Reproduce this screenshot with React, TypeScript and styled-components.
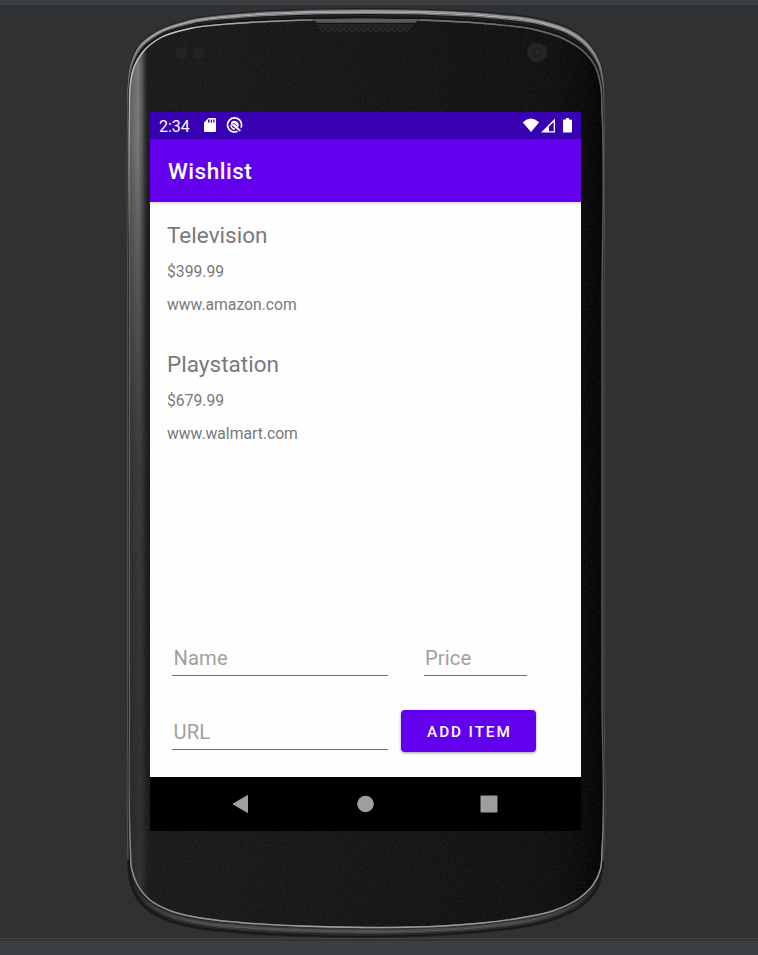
import React from "react";
import styled, { createGlobalStyle } from "styled-components";

const GlobalStyle = createGlobalStyle`
  * { box-sizing: border-box; }
  body { margin: 0; background: #2f3133; font-family: Roboto, "Noto Sans", sans-serif; }
`;

const Workspace = styled.main`
  position: relative;
  width: 758px;
  height: 955px;
  overflow: hidden;
  display: flex;
  flex-direction: column;
  background: #2f3133;
`;

const TopEdge = styled.div`
  height: 5px;
  flex: none;
  background: #3c3f41;
`;

const Stage = styled.div`
  flex: 1;
  padding: 107px 177px 0 150px;
`;

const BottomEdge = styled.div`
  height: 17px;
  flex: none;
  border-top: 1px solid #424446;
  background: linear-gradient(#303234 2px, #3c3f41 2px);
`;

const Shell = styled.svg`
  position: absolute;
  inset: 0;
  pointer-events: none;
`;

const Screen = styled.section`
  position: relative;
  width: 431px;
  height: 719px;
  display: flex;
  flex-direction: column;
  background: #fefefe;
`;

const StatusBar = styled.header`
  height: 27px;
  flex: none;
  display: flex;
  align-items: center;
  padding: 0 8px 0 9px;
  background: #3700b3;
  color: #fff;
`;

const Clock = styled.span`
  width: 44px;
  padding-top: 2px;
  font-size: 16px;
  line-height: 26px;
`;

const StatusGroup = styled.div<{ $end?: boolean }>`
  display: flex;
  align-items: center;
  margin-left: ${({ $end }) => ($end ? "auto" : "0")};
  margin-top: -1px;
  svg { display: block; }
`;

const AppBar = styled.div`
  height: 63px;
  flex: none;
  padding: 1px 18px 0;
  background: #6200ee;
  box-shadow: 0 1px 3px rgba(0, 0, 0, 0.2);
`;

const Title = styled.h1`
  margin: 0;
  color: #fff;
  font-size: 22.5px;
  font-weight: 500;
  line-height: 63px;
  letter-spacing: 0.52px;
`;

const Wishes = styled.ul`
  list-style: none;
  margin: 0;
  padding: 17px 17px 0;
  flex: 1;
`;

const Wish = styled.li`
  height: 129px;
  color: #797979;
`;

const WishName = styled.h2`
  margin: 0 0 4px;
  font-size: 22.5px;
  font-weight: 400;
  line-height: 32px;
  letter-spacing: 0.03px;
`;

const WishDetail = styled.p`
  margin: 0;
  font-size: 15.7px;
  line-height: 33px;
  letter-spacing: 0;
`;

const Form = styled.form`
  height: 149px;
  flex: none;
  display: grid;
  grid-template-columns: 216px 135px;
  grid-template-rows: 48px 48px;
  row-gap: 26px;
  column-gap: 13.4px;
  padding: 0 0 0 22px;
`;

const Field = styled.input<{ $narrow?: boolean }>`
  width: ${({ $narrow }) => ($narrow ? "103px" : "216px")};
  height: 48px;
  margin: 0 0 0 ${({ $narrow }) => ($narrow ? "22.6px" : "0")};
  padding: ${({ $narrow }) => ($narrow ? "12px 2px 0 1px" : "12px 2px 0 1.5px")};
  border: 0;
  border-bottom: 1px solid #707070;
  border-radius: 0;
  outline: 0;
  background: transparent;
  font: 400 20.2px Roboto, sans-serif;
  letter-spacing: 0.1px;
  color: #333;
  &::placeholder { color: #a0a0a0; opacity: 1; }
`;

const AddButton = styled.button`
  width: 135px;
  height: 42px;
  margin-top: 8px;
  padding: 2px 0 0 1px;
  border: 0;
  border-radius: 4px;
  background: #6200ee;
  color: #fff;
  font: 500 15.3px Roboto, sans-serif;
  letter-spacing: 1.9px;
  white-space: nowrap;
  box-shadow: 0 1px 3px rgba(0, 0, 0, 0.38);
`;

const NavBar = styled.nav`
  height: 54px;
  flex: none;
  display: grid;
  grid-template-columns: 18px 18px 18px;
  column-gap: 105.5px;
  align-items: center;
  padding-left: 82px;
  background: #000;
  svg { display: block; }
`;

const items = [
  { name: "Television", price: "$399.99", url: "www.amazon.com" },
  { name: "Playstation", price: "$679.99", url: "www.walmart.com" },
];

type Point = [number, number];

/* The casing's outer rim and the glass edge, paired point for point, clockwise. */
const outerPoints: Point[] = [
  [127.5, 300], [127.5, 110], [128, 86], [131, 63], [139, 45], [157, 31], [189, 19.5], [237, 13], [300, 9.6], [366, 8.5],
  [432, 9.5], [495, 13], [543, 19.5], [571, 29], [589, 43], [600, 62], [603.5, 83], [604, 110], [604, 300],
  [604, 700], [604, 850], [602.8, 871], [597, 890], [584, 905], [562, 917], [534, 925.5], [490, 931.5], [432, 935.8], [366, 937.5],
  [300, 936.3], [237, 933], [194, 928], [164, 919.5], [144, 907.5], [132, 890], [128, 870], [127.5, 850], [127.5, 700],
];
const innerPoints: Point[] = [
  [129.5, 300], [129.5, 110], [130, 88], [134, 67], [142, 53], [160, 38], [190, 28.5], [237, 23.3], [300, 20.2], [366, 19.5],
  [432, 20.5], [490, 24], [534, 29.5], [563, 38.5], [583, 51], [595, 66], [600.6, 85], [602, 110], [602, 300],
  [602, 700], [602, 850], [600.5, 869], [593, 885], [578, 899], [554, 910.5], [523, 917.5], [482, 923], [428, 926.7], [366, 927.5],
  [300, 926], [240, 922.5], [199, 917.7], [171, 911], [150, 900], [137, 884], [131.5, 868], [130.5, 850], [129.5, 700],
];

function smoothPath(points: Point[]) {
  const count = points.length;
  const at = (index: number) => points[(index + count) % count];
  const length = (a: Point, b: Point) => Math.hypot(b[0] - a[0], b[1] - a[1]);
  const tangent = (i: number): Point => {
    const a = at(i - 1);
    const b = at(i);
    const c = at(i + 1);
    const before = length(a, b);
    const after = length(b, c);
    return [0, 1].map(
      (k) => (((b[k] - a[k]) / before) * after + ((c[k] - b[k]) / after) * before) / (before + after)
    ) as Point;
  };
  let path = `M${at(0).join(" ")}`;
  for (let i = 0; i < count; i++) {
    const from = at(i);
    const to = at(i + 1);
    const reach = length(from, to) / 3;
    const start = tangent(i);
    const end = tangent(i + 1);
    path += `C${from[0] + start[0] * reach} ${from[1] + start[1] * reach} ${to[0] - end[0] * reach} ${to[1] - end[1] * reach} ${to[0]} ${to[1]}`;
  }
  return path + "Z";
}

const between = (t: number) =>
  smoothPath(outerPoints.map(([x, y], i) => [x + (innerPoints[i][0] - x) * t, y + (innerPoints[i][1] - y) * t]));

const outer = between(0);
const inner = between(1);
const topBands = [
  { t: 0.1, color: "#4b4b4c", width: 1.2 },
  { t: 0.21, color: "#98989a", width: 1.6 },
  { t: 0.33, color: "#b0b0b2", width: 1.6 },
  { t: 0.44, color: "#77777a", width: 1.4 },
  { t: 0.65, color: "#242424", width: 1.2 },
];
const bottomBands = [
  { t: 0.85, color: "#333", width: 1.6 },
  { t: 0.7, color: "#4b4b4b", width: 1.8 },
  { t: 0.55, color: "#585858", width: 1.8 },
  { t: 0.4, color: "#3e3e3e", width: 1.8 },
  { t: 0.24, color: "#262626", width: 1.6 },
];

function PhoneShell() {
  return (
    <Shell width="758" height="955" viewBox="0 0 758 955" aria-hidden="true">
      <defs>
        <linearGradient id="face" gradientUnits="userSpaceOnUse" x1="129" y1="0" x2="602" y2="0">
          <stop offset="0" stopColor="#262728" />
          <stop offset=".025" stopColor="#303031" />
          <stop offset=".04" stopColor="#1b1b1b" />
          <stop offset=".5" stopColor="#161616" />
          <stop offset=".9" stopColor="#111" />
          <stop offset=".96" stopColor="#0a0a0a" />
          <stop offset="1" stopColor="#040404" />
        </linearGradient>
        <linearGradient id="sideShine" x1="0" y1="0" x2="1" y2="0">
          <stop offset="0" stopColor="#555658" />
          <stop offset=".5" stopColor="#78787b" />
          <stop offset=".7" stopColor="#58585b" />
          <stop offset="1" stopColor="#242425" stopOpacity="0" />
        </linearGradient>
        <linearGradient id="shineFade" x1="0" y1="0" x2="0" y2="1">
          <stop offset="0" stopColor="#fff" />
          <stop offset=".12" stopColor="#fff" />
          <stop offset=".5" stopColor="#555" stopOpacity=".5" />
          <stop offset="1" stopColor="#000" stopOpacity="0" />
        </linearGradient>
        <linearGradient id="topFade" x1="0" y1="0" x2="0" y2="1">
          <stop offset=".3" stopColor="#fff" />
          <stop offset="1" stopColor="#666" />
        </linearGradient>
        <linearGradient id="bottomFade" x1="0" y1="0" x2="0" y2="1">
          <stop offset="0" stopColor="#000" />
          <stop offset=".45" stopColor="#555" />
          <stop offset=".85" stopColor="#fff" />
        </linearGradient>
        <linearGradient id="edge" gradientUnits="userSpaceOnUse" x1="129" y1="0" x2="602" y2="0">
          <stop offset="0" stopColor="#c8c8c8" />
          <stop offset=".15" stopColor="#bababa" />
          <stop offset=".4" stopColor="#808080" />
          <stop offset="1" stopColor="#626262" />
        </linearGradient>
        <linearGradient id="edgeLower" gradientUnits="userSpaceOnUse" x1="129" y1="0" x2="602" y2="0">
          <stop offset="0" stopColor="#8c8c8c" />
          <stop offset=".4" stopColor="#a0a0a0" />
          <stop offset="1" stopColor="#909090" />
        </linearGradient>
        <linearGradient id="edgeTopFade" x1="0" y1="0" x2="0" y2="1">
          <stop offset=".3" stopColor="#fff" />
          <stop offset="1" stopColor="#000" />
        </linearGradient>
        <linearGradient id="edgeBottomFade" x1="0" y1="0" x2="0" y2="1">
          <stop offset="0" stopColor="#000" />
          <stop offset=".5" stopColor="#fff" />
        </linearGradient>
        <mask id="shineMask" maskUnits="userSpaceOnUse" x="120" y="0" width="490" height="955">
          <rect x="127" y="40" width="22" height="850" fill="url(#shineFade)" />
        </mask>
        <mask id="topMask" maskUnits="userSpaceOnUse" x="120" y="0" width="490" height="955">
          <rect x="120" y="0" width="490" height="110" fill="url(#topFade)" />
          <rect x="120" y="110" width="490" height="750" fill="#666" />
        </mask>
        <mask id="bottomMask" maskUnits="userSpaceOnUse" x="120" y="0" width="490" height="955">
          <rect x="120" y="850" width="490" height="90" fill="url(#bottomFade)" />
        </mask>
        <mask id="edgeTopMask" maskUnits="userSpaceOnUse" x="120" y="0" width="490" height="955">
          <rect x="120" y="0" width="490" height="240" fill="url(#edgeTopFade)" />
        </mask>
        <mask id="edgeBottomMask" maskUnits="userSpaceOnUse" x="120" y="0" width="490" height="955">
          <rect x="120" y="780" width="490" height="160" fill="url(#edgeBottomFade)" />
        </mask>
        <clipPath id="faceClip"><path d={inner} /></clipPath>
        <pattern id="mesh" width="6" height="5" patternUnits="userSpaceOnUse">
          <rect width="6" height="5" fill="#272727" />
          <circle cx="1.5" cy="1" r=".9" fill="#111" />
          <circle cx="4.5" cy="3.5" r=".9" fill="#111" />
        </pattern>
        <filter id="grain" x="0" y="0" width="1" height="1">
          <feTurbulence type="fractalNoise" baseFrequency=".45" numOctaves="2" seed="4" />
          <feColorMatrix values="0 0 0 0 .5  0 0 0 0 .5  0 0 0 0 .5  .12 0 0 0 -.045" />
        </filter>
      </defs>
      <path d={outer} fill="#151515" stroke="#202021" strokeWidth="1" />
      <g mask="url(#topMask)" fill="none">
        {topBands.map((band) => (
          <path key={band.t} d={between(band.t)} stroke={band.color} strokeWidth={band.width} />
        ))}
      </g>
      <g mask="url(#bottomMask)" fill="none">
        {bottomBands.map((band) => (
          <path key={band.t} d={between(band.t)} stroke={band.color} strokeWidth={band.width} />
        ))}
      </g>
      <path d={inner} fill="url(#face)" />
      <g clipPath="url(#faceClip)">
        <g mask="url(#shineMask)">
          <rect x="128" y="30" width="20" height="860" fill="url(#sideShine)" />
        </g>
        <rect x="128" y="18" width="476" height="912" filter="url(#grain)" />
      </g>
      <path d={inner} fill="none" stroke="#606162" strokeWidth="1.3" />
      <path d={inner} fill="none" stroke="url(#edge)" strokeWidth="1.4" mask="url(#edgeTopMask)" />
      <path d={inner} fill="none" stroke="url(#edgeLower)" strokeWidth="1.4" mask="url(#edgeBottomMask)" />
      <path d="M311 19.5H421C416 21 413 25 410 29Q408 32 404 32H325Q320 32 318 27Q316 21 311 19.5Z" fill="url(#mesh)" />
      <path d="M312 19H420L415 22.8H318Z" fill="#5c5c5c" />
      <path d="M318 23.4H414" stroke="#151515" />
      <g fill="#232323"><circle cx="182" cy="53" r="6" /><circle cx="199" cy="53" r="6" /></g>
      <circle cx="537" cy="52.5" r="10" fill="#242424" />
      <circle cx="537" cy="52.5" r="5" fill="#202020" />
      <circle cx="537" cy="52.5" r="2" fill="#2b2b2b" />
    </Shell>
  );
}

export default function App() {
  return (
    <>
      <GlobalStyle />
      <Workspace>
        <TopEdge />
        <PhoneShell />
        <Stage>
          <Screen>
            <StatusBar>
              <Clock>2:34</Clock>
              <StatusGroup>
                <svg width="40" height="18" viewBox="0 0 40 18">
                  <path fillRule="evenodd" fill="#fff" d="M5.5 2H12Q13 2 13 3V15Q13 16 12 16H2Q1 16 1 15V6.5ZM5 3.5V6.5H6.5V3.5ZM7.7 3.5V6.5H9V3.5ZM10.2 3.5V6.5H11.5V3.5Z" />
                  <path d="M34.6 15.2A7 7 0 1 1 38 11.6" fill="none" stroke="#fff" strokeWidth="1.7" />
                  <path d="M28.2 6.2A4.4 4.4 0 0 1 35.8 9.4L34.7 11.3 38 14.2 36.6 15.6 31.2 11.1 29.3 9.4 27.9 8.7Z" fill="#fff" />
                  <path d="M27.7 9.2Q28.2 12.7 32 13.3" fill="none" stroke="#fff" strokeWidth="1.4" />
                  <path d="M29.4 7.7 31.7 7.8 34.2 10" fill="none" stroke="#3700b3" strokeWidth=".8" />
                </svg>
              </StatusGroup>
              <StatusGroup $end>
                <svg width="51" height="18" viewBox="0 0 51 18">
                  <path d="M.7 6.2Q8.9-1.1 17.2 6.2L9 16Z" fill="#fff" />
                  <path fillRule="evenodd" d="M19 16.5 33 2.5V16.5ZM27 10.6V15.2H31.7V5.9Z" fill="#fff" />
                  <path d="M44 2H47V3.5H49Q50 3.5 50 4.5V15.5Q50 16.5 49 16.5H42Q41 16.5 41 15.5V4.5Q41 3.5 42 3.5H44Z" fill="#fff" />
                </svg>
              </StatusGroup>
            </StatusBar>
            <AppBar><Title>Wishlist</Title></AppBar>
            <Wishes>
              {items.map((item) => (
                <Wish key={item.name}>
                  <WishName>{item.name}</WishName>
                  <WishDetail>{item.price}</WishDetail>
                  <WishDetail>{item.url}</WishDetail>
                </Wish>
              ))}
            </Wishes>
            <Form onSubmit={(event) => event.preventDefault()}>
              <Field placeholder="Name" aria-label="Name" />
              <Field $narrow placeholder="Price" aria-label="Price" />
              <Field placeholder="URL" aria-label="URL" />
              <AddButton>ADD ITEM</AddButton>
            </Form>
            <NavBar>
              <svg width="18" height="20" viewBox="0 0 18 20"><path d="M15.5 1.5V18.5L1 10Z" fill="#9e9e9e" stroke="#9e9e9e" strokeLinejoin="round" /></svg>
              <svg width="18" height="18" viewBox="0 0 18 18"><circle cx="9.5" cy="9" r="8.3" fill="#9e9e9e" /></svg>
              <svg width="19" height="18" viewBox="0 0 19 18"><rect x="1.5" y=".5" width="17" height="17" rx="1" fill="#9e9e9e" /></svg>
            </NavBar>
          </Screen>
        </Stage>
        <BottomEdge />
      </Workspace>
    </>
  );
}
